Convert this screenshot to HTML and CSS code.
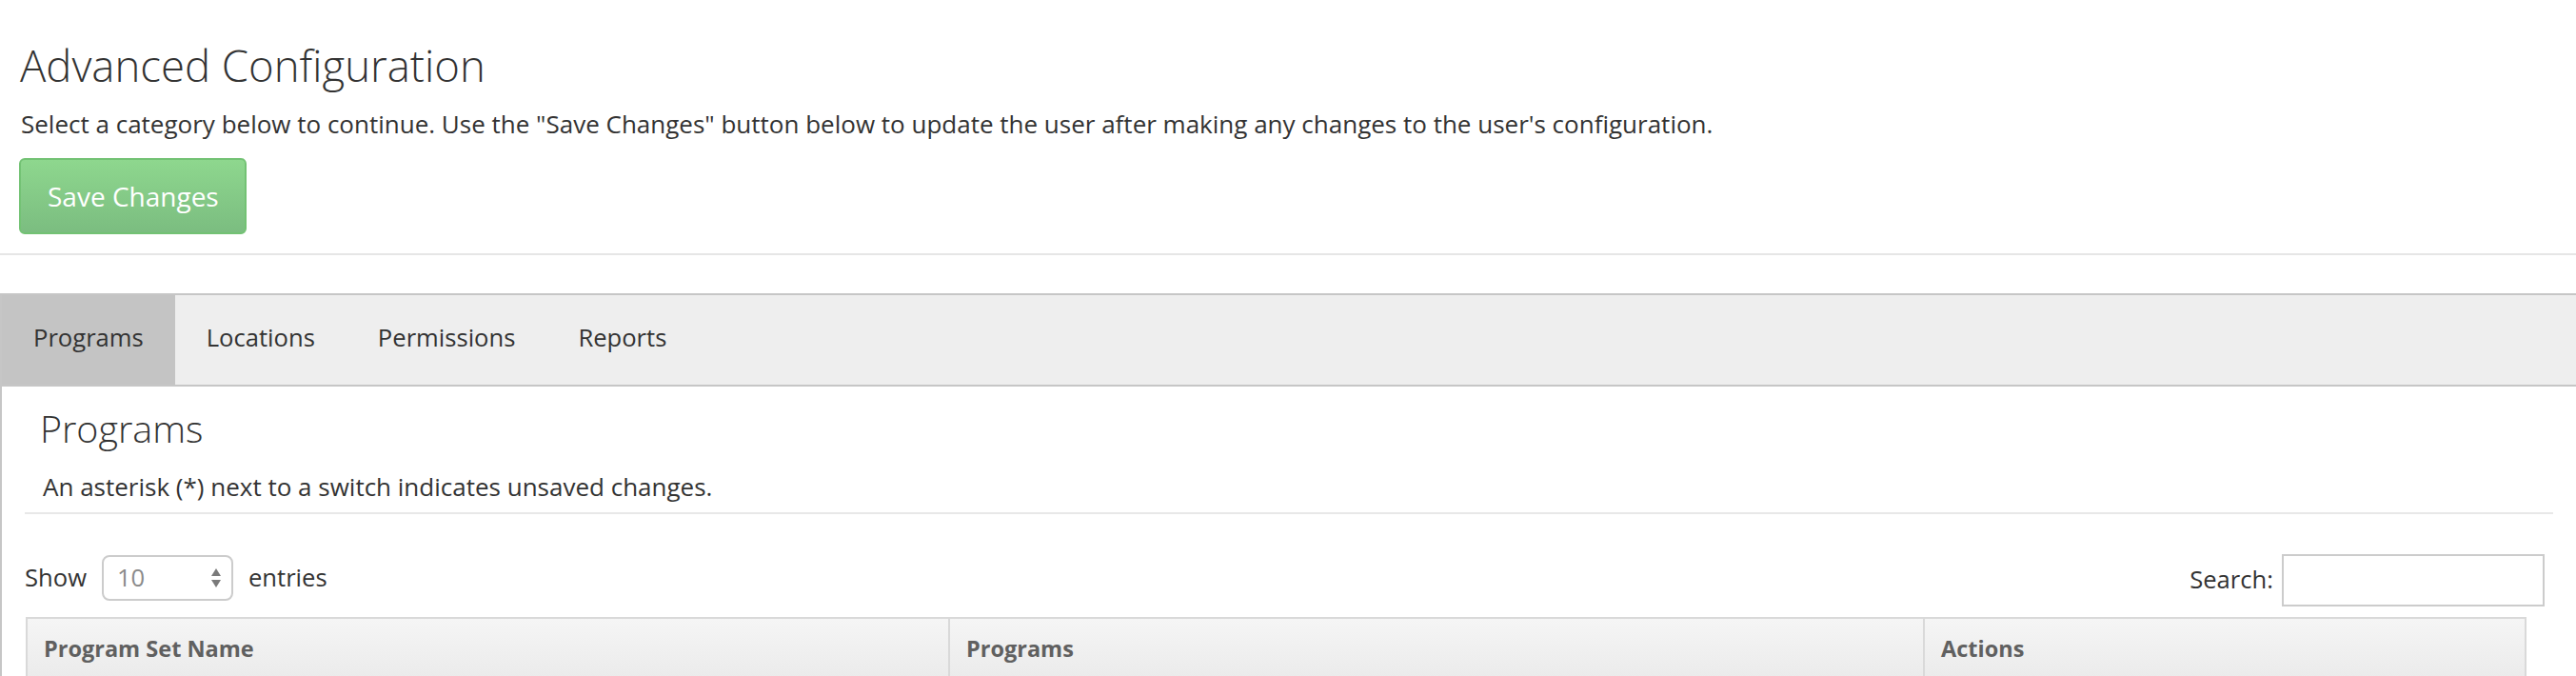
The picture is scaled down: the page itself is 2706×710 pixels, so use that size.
FILE: index.html
```html
<!DOCTYPE html>
<html lang="en">
<head>
<meta charset="utf-8">
<title>Advanced Configuration</title>
<link rel="stylesheet" href="styles.css">
</head>
<body>
  <div class="page-header">
    <h1 class="page-title">Advanced Configuration</h1>
    <p class="page-lead">Select a category below to continue. Use the "Save Changes" button below to update the user after making any changes to the user's configuration.</p>
    <button class="btn-save" type="button">Save Changes</button>
  </div>
  <hr class="page-rule">
  <div class="panel">
    <nav class="tabs">
      <a class="tab tab-active">Programs</a>
      <a class="tab">Locations</a>
      <a class="tab">Permissions</a>
      <a class="tab">Reports</a>
    </nav>
    <div class="tab-body">
      <div class="section-head">
        <h2 class="section-title">Programs</h2>
        <p class="section-note">An asterisk (*) next to a switch indicates unsaved changes.</p>
      </div>
      <div class="dt-controls">
        <div class="dt-length">
          <span>Show</span>
          <span class="fake-select">
            <span class="fake-select-value">10</span>
            <svg class="fake-select-arrows" width="12" height="22" viewBox="0 0 12 22"><path d="M6 1 L11 9 L1 9 Z" fill="#7a7a7a"/><path d="M6 21 L11 13 L1 13 Z" fill="#7a7a7a"/></svg>
          </span>
          <span>entries</span>
        </div>
        <div class="dt-filter">
          <span>Search:</span>
          <input class="dt-search" type="text" aria-label="Search">
        </div>
      </div>
      <table class="dt-table">
        <thead>
          <tr>
            <th class="col-name">Program Set Name</th>
            <th class="col-programs">Programs</th>
            <th class="col-actions">Actions</th>
          </tr>
        </thead>
      </table>
    </div>
  </div>
</body>
</html>
```
FILE: styles.css
```css
html, body {
  margin: 0;
  padding: 0;
  background: #ffffff;
}

body {
  font-family: "Open Sans", "Noto Sans", "Liberation Sans", sans-serif;
  color: #333333;
  font-size: 26px;
  overflow: hidden;
}

.page-header {
  display: flex;
  flex-direction: column;
  align-items: flex-start;
  padding: 0 20px;
}

.page-title {
  margin: 43.4px 0 0 1px;
  font-size: 45.5px;
  font-weight: 300;
  line-height: 50px;
  color: #333333;
}

.page-lead {
  margin: 19px 0 0 2px;
  font-size: 26px;
  line-height: 37px;
}

.btn-save {
  margin-top: 16.6px;
  height: 80px;
  padding: 0 27px 0 28px;
  font-family: inherit;
  font-size: 28px;
  line-height: 40px;
  color: #ffffff;
  background: linear-gradient(#8ed78e, #7bbd80);
  border: 2px solid #73c274;
  border-radius: 6px;
}

.page-rule {
  margin: 20px 0 0 0;
  height: 2px;
  border: 0;
  background: #e6e6e6;
}

.panel {
  margin-top: 40px;
  border-top: 2px solid #c6c6c6;
  border-left: 2px solid #c6c6c6;
  min-height: 420px;
}

.tabs {
  display: flex;
  background: #eeeeee;
  border-bottom: 2px solid #c6c6c6;
}

.tab {
  padding: 27px 33px 31px 33px;
  font-size: 25.6px;
  line-height: 36px;
  color: #333333;
}

.tab-active {
  background: #c4c4c4;
}

.tab-body {
  padding: 0 24px;
}

.section-head {
  padding: 23.3px 19px 8px 19px;
  border-bottom: 2px solid #e8e8e8;
}

.section-title {
  margin: 0 0 0 -3px;
  font-size: 39.4px;
  font-weight: 300;
  line-height: 43px;
}

.section-note {
  margin: 21.2px 0 0 0;
  line-height: 36.6px;
}

.dt-controls {
  display: flex;
  justify-content: space-between;
  align-items: flex-start;
  margin-top: 42px;
  font-size: 25.6px;
}

.dt-length {
  display: flex;
  align-items: center;
  gap: 16px;
  margin-top: 1px;
  line-height: 36.6px;
}

.fake-select {
  display: flex;
  align-items: center;
  justify-content: space-between;
  box-sizing: border-box;
  width: 138px;
  height: 48px;
  padding: 0 10px 0 14px;
  border: 2px solid #cccccc;
  border-radius: 8px;
  color: #8a8a8a;
}

.dt-filter {
  display: flex;
  align-items: center;
  gap: 9px;
  margin-right: 9px;
  line-height: 36.6px;
}

.dt-search {
  box-sizing: border-box;
  width: 276px;
  height: 55px;
  border: 2px solid #cccccc;
  border-radius: 0;
  margin: 0;
  padding: 0 8px;
  font-family: inherit;
  font-size: 25.6px;
  background: #ffffff;
}

.dt-table {
  margin: 11px 0 0 1px;
  width: 2627px;
  border-collapse: collapse;
}

.dt-table th {
  text-align: left;
  padding: 14px 17px 14px 17px;
  font-size: 23.5px;
  line-height: 34px;
  font-weight: 700;
  color: #606060;
  background: linear-gradient(#f5f5f5, #ebebeb);
  border: 2px solid #d9d9d9;
}

.col-name {
  width: 933px;
}

.col-programs {
  width: 988px;
}
```
